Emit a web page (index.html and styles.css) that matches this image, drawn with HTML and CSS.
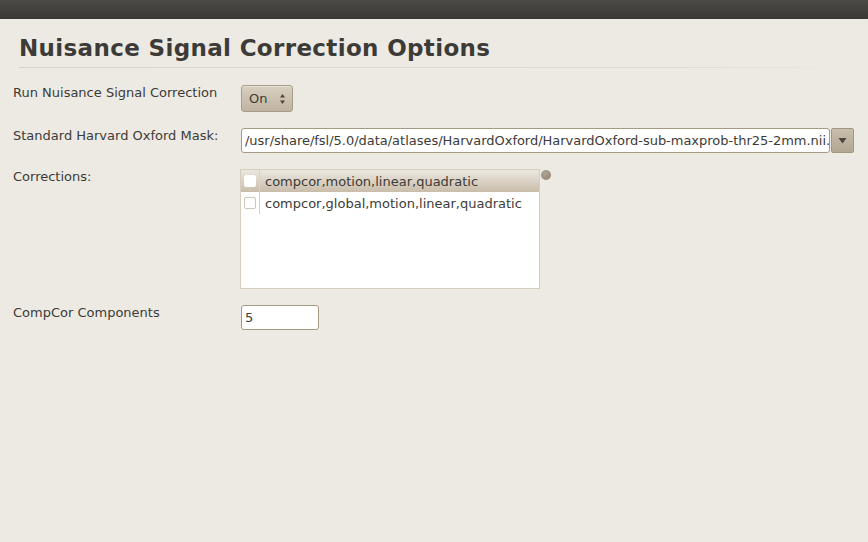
FILE: index.html
```html
<!DOCTYPE html>
<html>
<head>
<meta charset="utf-8">
<link rel="stylesheet" href="styles.css">
</head>
<body>
<div class="topbar"></div>
<div class="page">
  <h1 class="title">Nuisance Signal Correction Options</h1>
  <div class="sep"></div>
  <div class="form">
    <div class="row row-run">
      <div class="label">Run Nuisance Signal Correction</div>
      <div class="combo">
        <span class="combo-text">On</span>
        <span class="arrows">
          <svg width="7" height="12" viewBox="0 0 7 12"><path d="M3.5 1 L6 4.5 L1 4.5 Z" fill="#4a463e"/><path d="M3.5 11 L6 7.5 L1 7.5 Z" fill="#4a463e"/></svg>
        </span>
      </div>
    </div>
    <div class="row row-mask">
      <div class="label">Standard Harvard Oxford Mask:</div>
      <div class="entry entry-wide">/usr/share/fsl/5.0/data/atlases/HarvardOxford/HarvardOxford-sub-maxprob-thr25-2mm.nii.gz</div>
      <div class="dropbtn">
        <svg width="9" height="7" viewBox="0 0 9 7"><path d="M0.5 1 L8.5 1 L4.5 6.5 Z" fill="#4a463e"/></svg>
      </div>
    </div>
    <div class="row row-corr">
      <div class="label">Corrections:</div>
      <div class="listwrap">
        <div class="list">
          <div class="item selected">
            <span class="checkcell"><span class="check"></span></span>
            <span class="itemtext">compcor,motion,linear,quadratic</span>
          </div>
          <div class="item">
            <span class="checkcell"><span class="check"></span></span>
            <span class="itemtext">compcor,global,motion,linear,quadratic</span>
          </div>
        </div>
        <span class="knob"></span>
      </div>
    </div>
    <div class="row row-comp">
      <div class="label">CompCor Components</div>
      <div class="entry entry-small">5</div>
    </div>
  </div>
</div>
</body>
</html>
```
FILE: styles.css
```css
html, body {
  margin: 0;
  padding: 0;
}
body {
  width: 868px;
  height: 542px;
  background: #edeae3;
  font-family: "DejaVu Sans", sans-serif;
  color: #3c3b37;
  overflow: hidden;
}
.topbar {
  height: 19px;
  background: linear-gradient(#4b4a45, #3a3935);
}
.page {
  padding: 0 0 0 13px;
}
.title {
  margin: 0;
  padding: 15px 0 0 6px;
  font-size: 23px;
  font-weight: bold;
  line-height: 28px;
  color: #3c3b37;
  letter-spacing: 0.35px;
}
.sep {
  margin: 5px 0 0 6px;
  width: 822px;
  height: 1px;
  background: linear-gradient(90deg, #d9d4ca, #e2ddd4 85%, #edeae3);
}
.form {
  display: flex;
  flex-direction: column;
}
.row {
  display: flex;
  align-items: flex-start;
}
.label {
  width: 228px;
  font-size: 13px;
  line-height: 16px;
  color: #3c3b37;
}
.row-run {
  margin-top: 17px;
}
.combo {
  box-sizing: border-box;
  width: 52px;
  height: 27px;
  border: 1px solid #a89d88;
  border-radius: 3px;
  background: linear-gradient(#d8cfc0, #c0b4a0);
  display: flex;
  align-items: center;
  justify-content: space-between;
  padding: 0 6px 0 7px;
  box-shadow: inset 0 1px 0 rgba(255,255,255,0.4);
}
.combo-text {
  font-size: 13px;
  color: #3c3b37;
}
.arrows {
  display: flex;
  align-items: center;
}
.row-mask {
  margin-top: 16px;
}
.entry {
  box-sizing: border-box;
  background: #ffffff;
  border: 1px solid #a79a82;
  border-radius: 3px;
  font-size: 13px;
  color: #3c3b37;
  white-space: nowrap;
  overflow: hidden;
  line-height: 23px;
  padding-left: 3px;
}
.entry-wide {
  width: 589px;
  height: 25px;
  letter-spacing: -0.02px;
}
.dropbtn {
  box-sizing: border-box;
  width: 23px;
  height: 25px;
  margin-left: 1px;
  background: linear-gradient(#c8bead, #b2a792);
  border: 1px solid #a2967f;
  border-radius: 2px;
  display: flex;
  align-items: center;
  justify-content: center;
}
.row-corr {
  margin-top: 16px;
}
.listwrap {
  display: flex;
  align-items: flex-start;
  margin-left: -1px;
}
.list {
  box-sizing: border-box;
  width: 300px;
  height: 120px;
  background: #ffffff;
  border: 1px solid #d7cebd;
}
.item {
  display: flex;
  align-items: center;
  height: 22px;
  font-size: 13px;
}
.item.selected {
  background: linear-gradient(#ece7df, #c9bdaa);
}
.checkcell {
  width: 19px;
  height: 22px;
  border-right: 1px solid #d8d2c7;
  display: flex;
  align-items: center;
  justify-content: center;
  box-sizing: border-box;
}
.check {
  width: 10px;
  height: 10px;
  border: 1px solid #cdc6ba;
  border-radius: 2px;
  background: #ffffff;
}
.item.selected .check {
  border-color: #ffffff;
}
.itemtext {
  padding-left: 5px;
  color: #3c3b37;
}
.knob {
  width: 10px;
  height: 10px;
  border-radius: 50%;
  background: radial-gradient(circle at 40% 35%, #b0a593, #8d8271);
  margin-left: 1px;
  margin-top: 1px;
}
.row-comp {
  margin-top: 16px;
}
.entry-small {
  width: 78px;
  height: 25px;
}
```
